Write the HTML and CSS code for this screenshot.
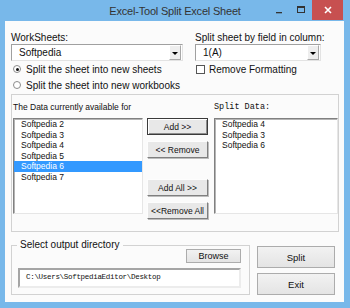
FILE: index.html
```html
<!doctype html>
<html lang="en">
<head>
    <meta charset="UTF-8">
    <title>Excel-Tool Split Excel Sheet</title>
    <link rel="stylesheet" href="styles.css">
</head>
<body>
<div class="window">
    <div class="titlebar">
        <span></span>
        <span class="title">Excel-Tool Split Excel Sheet</span>
        <div class="controls">
            <span class="ctl"><svg width="8" height="8" viewBox="0 0 8 8"><rect x="1" y="6" width="6" height="1.3" fill="#333"/></svg></span>
            <span class="ctl"><svg width="8" height="8" viewBox="0 0 8 8"><rect x="0.5" y="0.5" width="7" height="6" fill="none" stroke="#333"/><rect x="0.5" y="0.5" width="7" height="1.5" fill="#333"/></svg></span>
            <span class="ctl close"><svg width="8" height="8" viewBox="0 0 8 8"><path d="M1 1 L7 7 M7 1 L1 7" stroke="#fff" stroke-width="1.6"/></svg></span>
        </div>
    </div>
    <div class="client">
        <div class="top">
            <span class="lbl">WorkSheets:</span>
            <span class="lbl">Split sheet by field in column:</span>
            <div class="combo"><span>Softpedia</span><i class="drop"></i></div>
            <div class="combo"><span>1(A)</span><i class="drop"></i></div>
            <div class="opt"><span class="radio on"></span>Split the sheet into new sheets</div>
            <div class="opt"><span class="check"></span>Remove Formatting</div>
            <div class="opt"><span class="radio"></span>Split the sheet into new workbooks</div>
        </div>

        <div class="group">
            <div class="heads">
                <span class="head-left">The Data currently available for</span>
                <span class="head-right">Split Data:</span>
            </div>
            <div class="lists">
                <ul class="list list-left">
                    <li>Softpedia 2</li>
                    <li>Softpedia 3</li>
                    <li>Softpedia 4</li>
                    <li>Softpedia 5</li>
                    <li class="selected">Softpedia 6</li>
                    <li>Softpedia 7</li>
                </ul>
                <div class="movers">
                    <button class="btn default">Add &gt;&gt;</button>
                    <button class="btn">&lt;&lt; Remove</button>
                    <button class="btn spaced">Add All &gt;&gt;</button>
                    <button class="btn">&lt;&lt;Remove All</button>
                </div>
                <ul class="list list-right">
                    <li>Softpedia 4</li>
                    <li>Softpedia 3</li>
                    <li>Softpedia 6</li>
                </ul>
            </div>
        </div>

        <div class="bottom">
            <fieldset class="outdir">
                <legend>Select output directory</legend>
                <div class="browse-row"><button class="btn flat browse">Browse</button></div>
                <div class="path">C:\Users\SoftpediaEditor\Desktop</div>
            </fieldset>
            <div class="actions">
                <button class="btn flat big">Split</button>
                <button class="btn flat big">Exit</button>
            </div>
        </div>
    </div>
</div>
</body>
</html>
```

FILE: styles.css
```css
body {
    margin: 0;
    font-family: "Liberation Sans", Arial, sans-serif;
    color: #111;
}

.window {
    width: 350px;
    height: 308px;
    box-sizing: border-box;
    padding: 0 6px 6px 5px;
    background: #78b8ea;
    display: flex;
    flex-direction: column;
}

.titlebar {
    height: 21px;
    margin: 0 -6px 0 -5px;
    display: grid;
    grid-template-columns: 1fr auto 1fr;
    align-items: start;
}

.title {
    font-size: 11px;
    letter-spacing: -0.2px;
    color: #333;
    line-height: 22px;
}

.controls {
    justify-self: end;
    display: flex;
    margin-right: 7px;
}

.ctl {
    width: 22px;
    height: 20px;
    display: flex;
    align-items: center;
    justify-content: center;
}

.close {
    width: 31px;
    background: #c75050;
}

.client {
    flex: 1;
    background: #fbfbfb;
    padding: 11px 5px 0 6px;
    font-size: 10px;
}

.top {
    display: grid;
    grid-template-columns: 172px 126px;
    grid-template-rows: 12px 17px 16px 16px;
    column-gap: 12px;
}

.lbl {
    line-height: 12px;
    white-space: nowrap;
}

.combo {
    display: flex;
    align-items: center;
    justify-content: space-between;
    background: #fff;
    border: 1px solid;
    border-color: #a0a0a0 #e3e3e3 #e3e3e3 #a0a0a0;
    padding-left: 7px;
}

.drop {
    width: 10px;
    height: 13px;
    margin-right: 1px;
    background: #eee;
    border: 1px solid;
    border-color: #fff #a8a8a8 #a8a8a8 #fff;
    display: flex;
    align-items: center;
    justify-content: center;
}

.drop::after {
    content: "";
    border-left: 3px solid transparent;
    border-right: 3px solid transparent;
    border-top: 3px solid #000;
    margin-top: 1px;
}

.opt {
    display: flex;
    align-items: center;
    white-space: nowrap;
}

.radio {
    width: 6px;
    height: 6px;
    border: 1px solid #8c8c8c;
    border-radius: 50%;
    background: #fff;
    margin: 0 5px 0 2px;
    display: flex;
    align-items: center;
    justify-content: center;
}

.radio.on::after {
    content: "";
    width: 3px;
    height: 3px;
    border-radius: 50%;
    background: #111;
}

.check {
    width: 7px;
    height: 7px;
    border: 1px solid #555;
    background: #fff;
    margin: 0 4px 0 1px;
}

.group {
    margin-top: 1px;
    width: 328px;
    box-sizing: border-box;
    border: 1px solid #d2d2d2;
    padding: 6px 0 12px 1px;
}

.heads {
    display: flex;
    line-height: 12px;
}

.head-left {
    width: 201px;
    font-size: 8.5px;
}

.head-right {
    font-family: "Liberation Mono", monospace;
    font-size: 8.5px;
}

.lists {
    display: flex;
    align-items: flex-start;
    margin-top: 5px;
}

.list {
    margin: 0;
    padding: 0;
    list-style: none;
    height: 96px;
    box-sizing: border-box;
    background: #fff;
    border: 1px solid;
    border-color: #808080 #e6e6e6 #e6e6e6 #808080;
    box-shadow: inset 1px 1px 0 #b4b4b4;
    font-size: 8.5px;
}

.list li {
    line-height: 10.6px;
    padding-left: 7px;
}

.list li.selected {
    background: #3399ff;
    color: #fff;
}

.list-left {
    width: 130px;
    margin-right: 4px;
}

.list-right {
    width: 124px;
    margin-left: 6px;
}

.movers {
    width: 61px;
    display: flex;
    flex-direction: column;
    gap: 6px;
}

.btn {
    font-family: "Liberation Sans", Arial, sans-serif;
    font-size: 8.5px;
    color: #111;
    height: 17px;
    padding: 0;
    background: #e8e8e8;
    border: 1px solid;
    border-color: #fdfdfd #7f7f7f #7f7f7f #fdfdfd;
    box-shadow: 1px 1px 0 #bdbdbd;
}

.btn.default {
    border-color: #3a3a3a;
    box-shadow: inset 1px 1px 0 #fff, inset -1px -1px 0 #8c8c8c;
}

.btn.spaced {
    margin-top: 15px;
}

.bottom {
    display: flex;
    margin-top: 7px;
}

.outdir {
    margin: 0;
    width: 239px;
    box-sizing: border-box;
    border: 1px solid #d2d2d2;
    padding: 0 8px 5px 6px;
}

.outdir legend {
    font-size: 10px;
    line-height: 12px;
    padding: 0 3px;
    margin-left: -1px;
}

.browse-row {
    display: flex;
    justify-content: flex-end;
    margin-top: -2px;
}

.btn.flat {
    background: linear-gradient(#f2f2f2, #e4e4e4);
    border: 1px solid #acacac;
    box-shadow: none;
}

.browse {
    width: 55px;
    height: 14px;
    font-size: 9px;
}

.path {
    margin-top: 5px;
    height: 20px;
    box-sizing: border-box;
    background: #fff;
    border: 2px solid;
    border-color: #a5a5a5 #ececec #ececec #a5a5a5;
    padding: 3px 0 0 6px;
    font-family: "Liberation Mono", monospace;
    font-size: 7.5px;
    letter-spacing: -0.3px;
    line-height: 9px;
}

.actions {
    display: flex;
    flex-direction: column;
    gap: 5px;
    margin-left: 7px;
    padding-top: 7px;
}

.big {
    width: 78px;
    height: 22px;
    font-size: 9.5px;
}
```
